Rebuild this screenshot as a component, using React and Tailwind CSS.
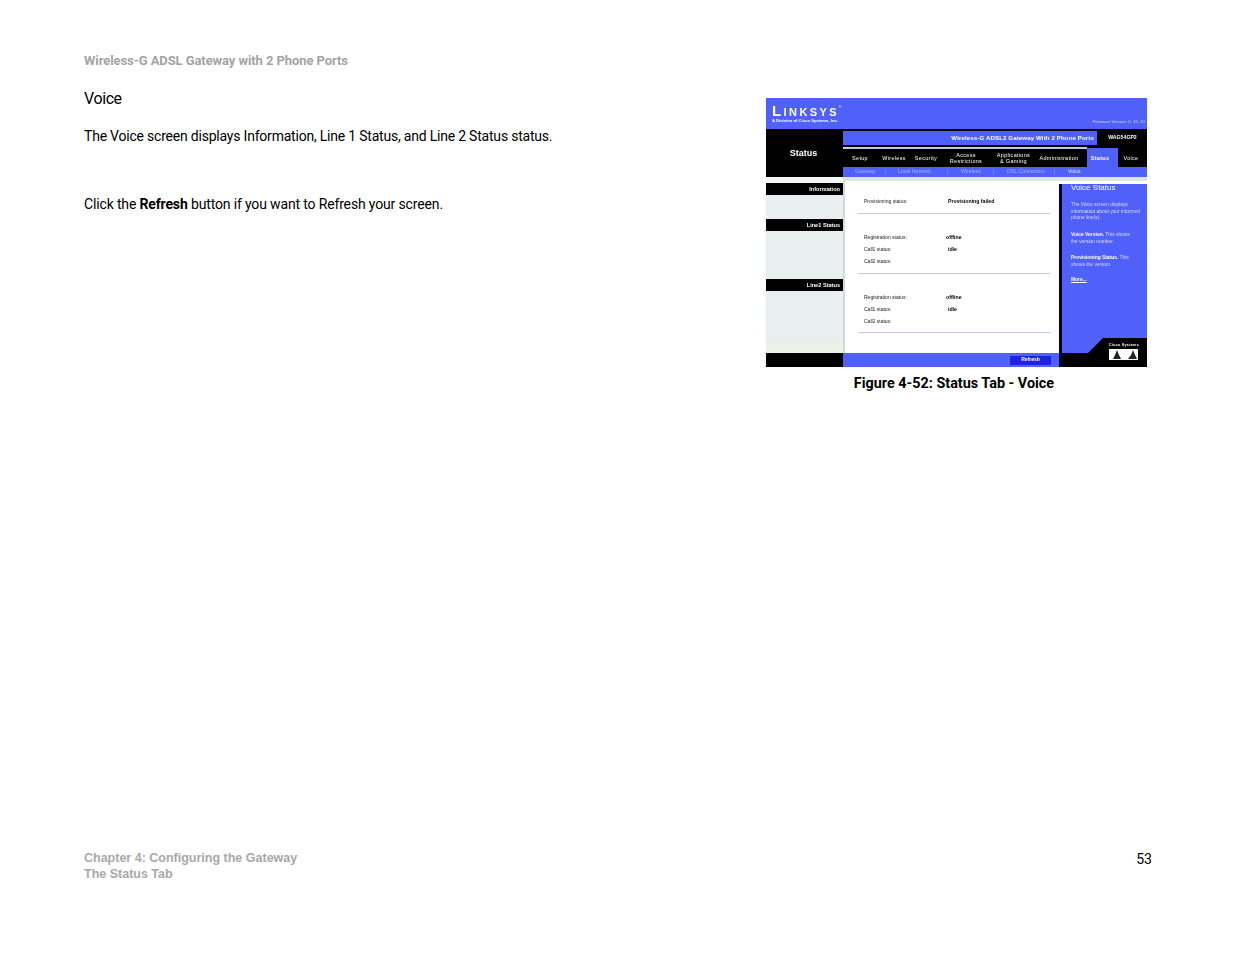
const sans = 'font-["Liberation_Sans",Arial,sans-serif]'

function NavItem({ w, children, className = '' }) {
  return <div className={`flex items-center justify-center text-center leading-[6px] ${w} ${className}`}>{children}</div>
}

function StatusRow({ label, value, valueCls = 'ml-[38px]', cls = 'h-[12px]' }) {
  return (
    <div className={`flex items-center text-[5px] text-[#222] ${cls}`}>
      <span className="w-[46px] shrink-0 whitespace-nowrap">{label}</span>
      {value && <span className={`font-bold text-[5.2px] text-black whitespace-nowrap ${valueCls}`}>{value}</span>}
    </div>
  )
}

function Screenshot() {
  return (
    <div className={`w-[381px] h-[269px] flex flex-col bg-white blur-[0.5px] ${sans}`}>
      {/* logo bar */}
      <div className="h-[31px] bg-[#5060fb] flex justify-between text-white">
        <div className="pl-[6px] pt-[6px]">
          <div className="h-[14px] flex items-end tracking-[2.4px] font-bold leading-none whitespace-nowrap">
            <span className="text-[15px] leading-[14px]">L</span>
            <span className="text-[11px] leading-[12px]">INKSYS</span>
            <span className="text-[3px] self-start mt-[2px]">®</span>
          </div>
          <div className="text-[4.2px] font-bold leading-[6px] whitespace-nowrap">A Division of Cisco Systems, Inc.</div>
        </div>
        <div className="pr-[2px] pt-[21px] text-[4.3px] text-[#d5d9ff] whitespace-nowrap">Firmware Version: 0. 10. 10</div>
      </div>

      {/* title + tabs */}
      <div className="h-[48px] flex bg-black text-white">
        <div className="w-[77px] shrink-0 flex items-center justify-center pt-[2px] pr-[2px] text-[9px] font-bold">Status</div>
        <div className="flex-1 flex flex-col">
          <div className="h-[18px] pt-[2px] flex">
            <div className="w-[254px] h-[14px] bg-[#5060fb] flex items-center justify-end pr-[3px] text-[6.1px] font-bold tracking-[0.12px] whitespace-nowrap">
              Wireless-G ADSL2 Gateway With 2 Phone Ports
            </div>
            <div className="flex-1 h-[14px] flex items-center justify-center text-[5.2px] font-bold pl-[1px]">WAG54GP2</div>
          </div>
          <div className="h-[20px] flex text-[5.5px] tracking-[0.3px] relative pt-[1px]">
            <div className="absolute left-0 top-0 w-[244px] h-[2px] bg-[#c8cbd8]" />
            <NavItem w="w-[34px]">Setup</NavItem>
            <NavItem w="w-[34px]">Wireless</NavItem>
            <NavItem w="w-[30px]">Security</NavItem>
            <NavItem w="w-[50px]"><span>Access<br />Restrictions</span></NavItem>
            <NavItem w="w-[45px]"><span>Applications<br />&amp; Gaming</span></NavItem>
            <NavItem w="w-[51px]" className="pr-[5px]">Administration</NavItem>
            <NavItem w="w-[31px]" className="bg-[#5060fb] font-bold pr-[5px]">Status</NavItem>
            <NavItem w="w-[29px]" className="pr-[3px]">Voice</NavItem>
          </div>
          <div className="h-[10px] bg-[#5060fb] flex items-center text-[5.2px] text-[#aab1ff] whitespace-nowrap">
            <span className="ml-[12px] w-[30px]">Gateway</span>
            <span className="w-[13px]">|</span>
            <span className="w-[49px]">Local Network</span>
            <span className="w-[14px]">|</span>
            <span className="w-[32px]">Wireless</span>
            <span className="w-[14px]">|</span>
            <span className="w-[47px]">DSL Connection</span>
            <span className="w-[14px]">|</span>
            <span className="text-[#e2e5ff]">Voice</span>
          </div>
        </div>
      </div>

      {/* page body */}
      <div className="flex-1 flex min-h-0">
        <div className="w-[77px] shrink-0 flex flex-col">
          <div className="h-[6px] bg-[#f4f7f7]" />
          <div className="h-[12px] bg-black text-white text-[5.6px] font-bold flex items-center justify-end pr-[3px]">Information</div>
          <div className="h-[24px] bg-[#e9eeee]" />
          <div className="h-[12px] bg-black text-white text-[5.6px] font-bold flex items-center justify-end pr-[3px]">Line1 Status</div>
          <div className="h-[48px] bg-[#e9eeee]" />
          <div className="h-[12px] bg-black text-white text-[5.6px] font-bold flex items-center justify-end pr-[3px]">Line2 Status</div>
          <div className="flex-1 bg-gradient-to-b from-[#e9eeee] from-70% to-[#eef1e6]" />
          <div className="h-[14px] bg-black" />
        </div>

        <div className="w-[216px] shrink-0 flex flex-col">
          <div className="h-[4px] bg-[#dfe5e5]" />
          <div className="flex-1 border-l-2 border-[#d5d9d9] pl-[13px] pr-[9px]">
            <div className="pl-[6px] pt-[15px] h-[32px]">
              <StatusRow label="Provisioning status:" value="Provisioning failed" valueCls="ml-[38px]" />
            </div>
            <div className="h-px bg-[#c8c8f0]" />
            <div className="pl-[6px] pt-[18px] h-[59px]">
              <StatusRow label="Registration status:" value="offline" valueCls="ml-[36px]" />
              <StatusRow label="Call1 status:" value="idle" />
              <StatusRow label="Call2 status:" />
            </div>
            <div className="h-px bg-[#c8c8f0]" />
            <div className="pl-[6px] pt-[18px] h-[58px]">
              <StatusRow label="Registration status:" value="offline" valueCls="ml-[36px]" />
              <StatusRow label="Call1 status:" value="idle" />
              <StatusRow label="Call2 status:" />
            </div>
            <div className="h-px bg-[#c8c8f0]" />
          </div>
          <div className="h-[14px] bg-[#5060fb] flex items-center justify-end pr-[8px]">
            <div className="w-[41px] h-[9px] bg-[#2222dd] text-white text-[5px] font-bold flex items-center justify-center">Refresh</div>
          </div>
        </div>

        <div className="flex-1 flex flex-col">
          <div className="h-[4px] bg-[#dfe5e5]" />
          <div className="h-[3px] bg-white" />
          <div className="flex-1 flex flex-col bg-[#5060fb] border-l-[3px] border-[#00003c] relative">
            <div className="pl-[9px] text-white flex-1">
              <div className="text-[8px] leading-[9px] -mt-[1px] whitespace-nowrap">Voice Status</div>
              <div className="text-[4.9px] leading-[6.5px] text-[#d8dbff] mt-[10px] whitespace-nowrap">The Voice screen displays<br />information about your informed<br />phone line(s).</div>
              <div className="text-[4.9px] leading-[7px] text-[#d8dbff] mt-[9px] whitespace-nowrap"><b className="text-white">Voice Version.</b> This shows<br />the version number.</div>
              <div className="text-[4.9px] leading-[7px] text-[#d8dbff] mt-[9px] whitespace-nowrap"><b className="text-white">Provisioning Status.</b> This<br />shows the version</div>
              <div className="text-[4.9px] leading-[7px] text-white font-bold underline mt-[8px]">More...</div>
            </div>
            <svg viewBox="0 0 85 29" className="w-[85px] h-[29px] block shrink-0">
              <polygon points="0,15 26,15 41,0 85,0 85,29 0,29" fill="#000" />
              <rect x="47" y="11" width="29" height="11" fill="#fff" />
              <polygon points="49,21 51,21 53,17 55,12 57,17 59,21 66,21 69,17 71,12 73,17 75,21 76,21" fill="#222" />
            </svg>
            <div className="absolute right-[8px] bottom-[19px] text-[3.8px] text-white font-bold tracking-[0.25px] leading-none whitespace-nowrap">Cisco Systems</div>
          </div>
        </div>
      </div>
    </div>
  )
}

export default function App() {
  return (
    <div className={`w-[1235px] h-[954px] bg-white flex flex-col justify-between pl-[84px] pr-[83px] ${sans}`}>
      <div>
        <div className="pt-[53px] h-[99px] text-[13px] tracking-[-0.08px] leading-[16px] font-bold text-[#a3a3a3] font-['Roboto',sans-serif]">
          Wireless-G ADSL Gateway with 2 Phone Ports
        </div>
        <div className="flex justify-between">
          <div className="text-black font-['Roboto',sans-serif]">
            <div className="text-[16px] tracking-[-0.4px] leading-[22px] -mt-[11px]">Voice</div>
            <p className="text-[14px] tracking-[-0.21px] leading-[18px] mt-[17px]">The Voice screen displays Information, Line 1 Status, and Line 2 Status status.</p>
            <p className="text-[14px] tracking-[-0.15px] leading-[18px] mt-[50px]">Click the <b>Refresh</b> button if you want to Refresh your screen.</p>
          </div>
          <div className="flex flex-col items-center mr-[5px] mt-[-1px]">
            <Screenshot />
            <div className="text-[14.4px] leading-[18px] mt-[8px] pr-[5px] font-bold text-black font-['Roboto',sans-serif]">Figure 4-52: Status Tab - Voice</div>
          </div>
        </div>
      </div>
      <div className="flex justify-between pb-[72px]">
        <div className="text-[12.5px] leading-[16px] font-bold text-[#a8a8a8]">
          <div>Chapter 4: Configuring the Gateway</div>
          <div>The Status Tab</div>
        </div>
        <div className="text-[14px] leading-[18px] text-black font-['Roboto',sans-serif]">53</div>
      </div>
    </div>
  )
}
